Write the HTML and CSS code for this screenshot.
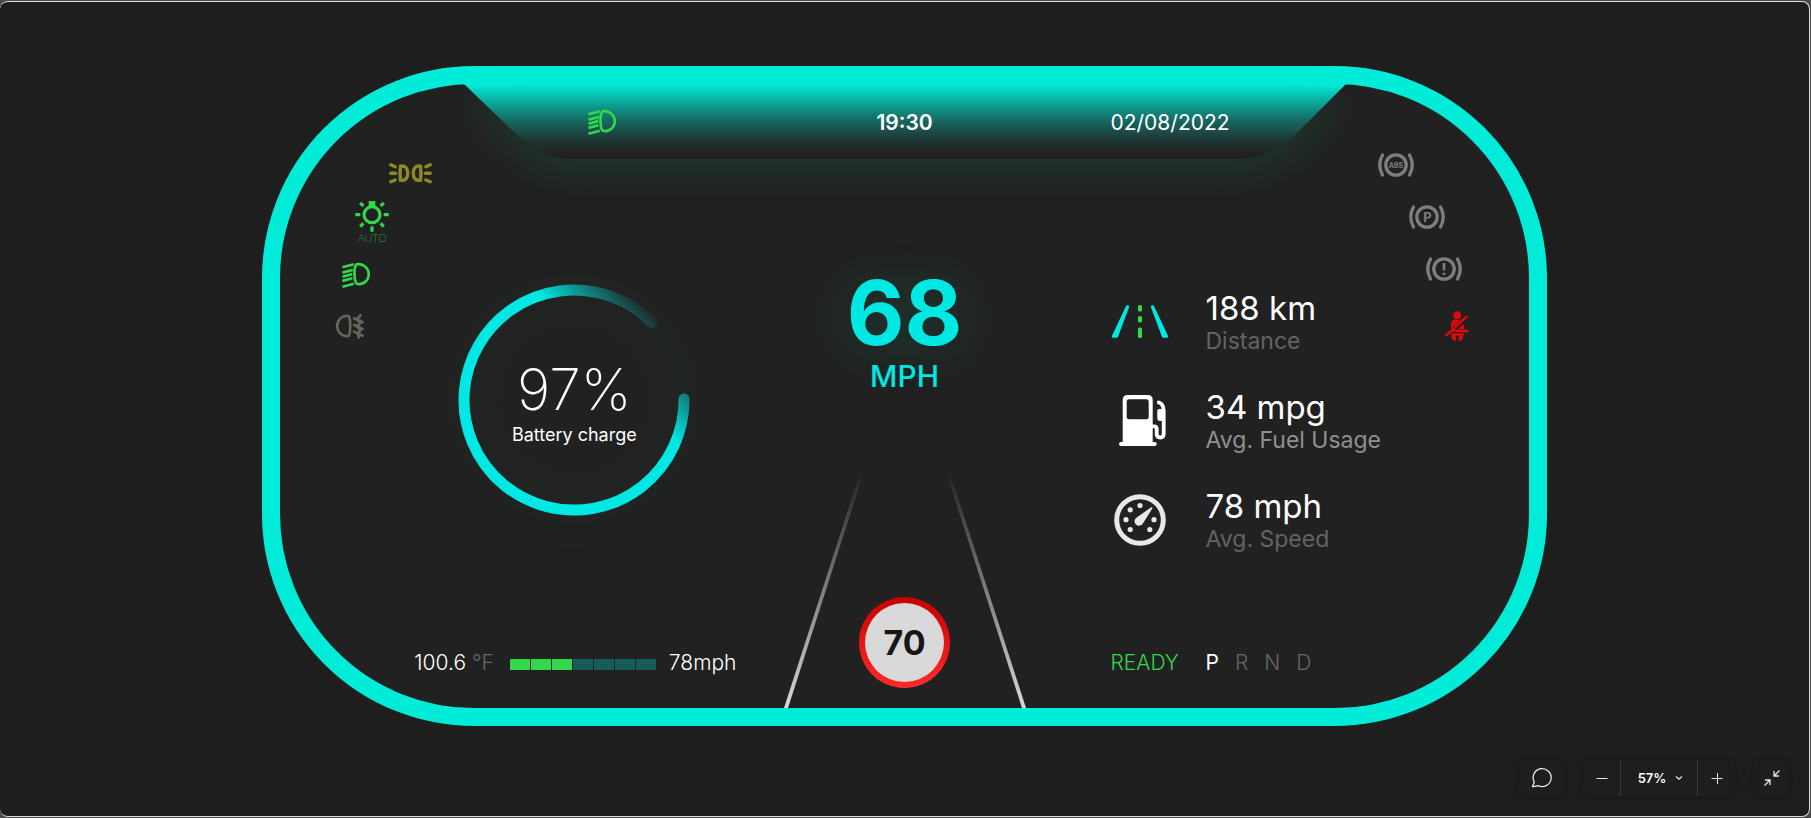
FILE: index.html
```html
<!DOCTYPE html>
<html lang="en">
<head>
<meta charset="utf-8">
<title>Car dashboard</title>
<link rel="stylesheet" href="styles.css">
</head>
<body>
<div class="window">
  <main class="stage">
    <section class="cluster" aria-label="Instrument cluster">
      <header class="topbar">
        <svg class="topbar-shape" viewBox="0 0 882 75" preserveAspectRatio="none" aria-hidden="true">
          <defs>
            <linearGradient id="topFade" x1="0" y1="0" x2="0" y2="1">
              <stop offset="0" stop-color="#00ecd8"/>
              <stop offset=".25" stop-color="#0ba699"/>
              <stop offset=".5" stop-color="#17665f"/>
              <stop offset=".75" stop-color="#1e3734"/>
              <stop offset=".95" stop-color="#211f20"/>
              <stop offset="1" stop-color="#211f20"/>
            </linearGradient>
          </defs>
          <path d="M0 0H882L832 50Q804 75 772 75H110Q78 75 52 50Z" fill="url(#topFade)"/>
        </svg>
        <svg class="topbar-lamp green" width="28" height="25" viewBox="0 0 28 25" role="img" aria-label="Low beam"><use href="#lowbeam"/></svg>
        <time class="clock">19:30</time>
        <time class="date" datetime="2022-08-02">02/08/2022</time>
      </header>

      <div class="panels">
        <div class="panel">
          <div class="panel-main">
            <ul class="lamps lamps-left">
              <li class="lamp step-1 olive">
                <svg width="43" height="21" viewBox="0 0 43 21" role="img" aria-label="Parking lights">
                  <g fill="none" stroke="currentColor" stroke-width="3.4" stroke-linecap="round">
                    <path d="M1.8 1.8 6.2 3.7M1.8 10.2H6.5M1.8 18.8 6.2 17M41.2 1.8 36.8 3.7M41.2 10.2H36.5M41.2 18.8 36.8 17"/>
                    <path d="M11.5 3.2C17 2.2 18.7 6 18.7 10.2S17 18.2 11.5 17.2C10.9 13 10.9 7.4 11.5 3.2ZM31.5 3.2C26 2.2 24.3 6 24.3 10.2S26 18.2 31.5 17.2C32.1 13 32.1 7.4 31.5 3.2Z"/>
                  </g>
                </svg>
              </li>
              <li class="lamp step-2 green">
                <svg width="34" height="31" viewBox="0 0 34 31" role="img" aria-label="Automatic lights">
                  <rect x="13.7" y="0" width="6.6" height="7" fill="currentColor"/>
                  <circle cx="17" cy="13.7" r="8" fill="none" stroke="currentColor" stroke-width="3.2"/>
                  <path d="M.3 13.7H5.3M28.7 13.7H33.7M17 25.5V30.8M5.2 1.8 8.4 5M28.8 1.8 25.6 5M8.4 22.3 5.2 25.5M25.6 22.3 28.8 25.5" stroke="currentColor" stroke-width="3.2"/>
                </svg>
                <span class="lamp-text">AUTO</span>
              </li>
              <li class="lamp step-3 green">
                <svg width="28" height="25" viewBox="0 0 28 25" role="img" aria-label="Low beam">
                  <g id="lowbeam" fill="none" stroke="currentColor" stroke-width="2.7">
                    <path d="M.4 4.3 11.8 1.2M.4 9.6 10.8 7M.4 13.7 10.2 11.1M.4 17.9 10.4 15.3M.4 23.7 11.8 20.7"/>
                    <path d="M14.6 1.3C20 .2 26.7 4.3 26.7 11.2S20.5 22.2 15 20.8C12.2 19.5 11.2 4.5 14.6 1.3Z"/>
                  </g>
                </svg>
              </li>
              <li class="lamp step-4 taupe">
                <svg width="28" height="25" viewBox="0 0 28 25" role="img" aria-label="Rear fog light">
                  <g fill="none" stroke="currentColor" stroke-width="2.7" stroke-linecap="round">
                    <path d="M12.5 2C6 1 1.2 6 1.2 12S6 23 12.5 22C14.8 19 14.8 5 12.5 2Z"/>
                    <path d="M18 4.2 26.6 8M18 10.8 26.6 15M18 17.6 26.6 21.8"/>
                    <path d="M24.6 1.2 20.8 5.5 24.2 9.2 21 12.8 24.4 16.2 22 19.8 22.6 23.6"/>
                  </g>
                </svg>
              </li>
            </ul>
            <div class="gauge">
              <svg class="gauge-ring" viewBox="0 0 232 232" aria-hidden="true">
                <defs>
                  <linearGradient id="ringFade" gradientUnits="userSpaceOnUse" x1="149.6" y1="84.6" x2="200.1" y2="37.6">
                    <stop offset="0" stop-color="#00e8e3"/>
                    <stop offset="1" stop-color="#00e8e3" stop-opacity=".03"/>
                  </linearGradient>
                </defs>
                <path d="M226 116A110 110 0 1 1 194 39.5" fill="none" stroke="url(#ringFade)" stroke-width="11" stroke-linecap="round"/>
              </svg>
              <div class="gauge-text">
                <strong class="gauge-value">97%</strong>
                <span class="gauge-label">Battery charge</span>
              </div>
            </div>
          </div>
          <div class="status">
            <span>100.6 <span class="unit">°F</span></span>
            <span class="meter" role="img" aria-label="Level 3 of 7">
              <i class="seg on"></i><i class="seg on"></i><i class="seg on"></i><i class="seg"></i><i class="seg"></i><i class="seg"></i><i class="seg"></i>
            </span>
            <span>78mph</span>
          </div>
        </div>

        <div class="center">
          <strong class="speed">68</strong>
          <span class="speed-unit">MPH</span>
          <div class="road">
            <svg class="road-lines" width="240" height="238" viewBox="0 0 240 238" aria-hidden="true">
              <defs>
                <linearGradient id="roadFade" x1="0" y1="0" x2="0" y2="1">
                  <stop offset="0" stop-color="#d9d9d9" stop-opacity="0"/>
                  <stop offset="1" stop-color="#d9d9d9"/>
                </linearGradient>
              </defs>
              <path d="M76 0H79.5L3 238H-1Z" fill="url(#roadFade)"/>
              <path d="M164 0H160.5L237 238H241Z" fill="url(#roadFade)"/>
            </svg>
            <span class="limit">70</span>
          </div>
        </div>

        <div class="panel">
          <div class="panel-main">
            <ul class="stats">
              <li class="stat">
                <svg class="stat-icon" width="58" height="34" viewBox="0 0 58 34" aria-hidden="true">
                  <path d="M16.1 1.5 17 1.7 5.8 31.5H2ZM41.9 1.5 41 1.7 52.2 31.5H56Z" fill="#00e8e3" stroke="#00e8e3" stroke-width="2.4" stroke-linejoin="round"/>
                  <g fill="#32d74b"><rect x="27" y="0" width="4" height="6.5" rx="1.5"/><rect x="27" y="11" width="4" height="6.5" rx="1.5"/><rect x="27" y="22.5" width="4" height="10.5" rx="1.5"/></g>
                </svg>
                <div class="stat-text"><strong class="stat-value">188 km</strong><span class="stat-label">Distance</span></div>
              </li>
              <li class="stat">
                <svg class="stat-icon" width="54" height="52" viewBox="-6 0 54 52" aria-hidden="true">
                  <path fill="#fff" fill-rule="evenodd" d="M8.7 0H28.7Q33.7 0 33.7 5V47H35.7Q37.7 47 37.7 49T35.7 51H2Q0 51 0 49T2 47H3.7V5Q3.7 0 8.7 0ZM10.2 4.3Q7.7 4.3 7.7 6.8V21.8Q7.7 24.3 10.2 24.3H27.2Q29.7 24.3 29.7 21.8V6.8Q29.7 4.3 27.2 4.3Z"/>
                  <path d="M33 31.3H35.2Q37.7 31.3 37.7 34V39Q37.7 42.5 41.2 42.5T44.7 39V16Q44.7 9 39.8 7.5" fill="none" stroke="#fff" stroke-width="3.8" stroke-linecap="round"/>
                  <path d="M40 14H46V26H41Q38.3 26 38.3 23V16Q38.3 14 40 14Z" fill="#fff"/>
                </svg>
                <div class="stat-text"><strong class="stat-value">34 mpg</strong><span class="stat-label bright">Avg. Fuel Usage</span></div>
              </li>
              <li class="stat">
                <svg class="stat-icon" width="52" height="52" viewBox="0 0 52 52" aria-hidden="true">
                  <circle cx="26" cy="26" r="23.3" fill="none" stroke="#e8e8e8" stroke-width="5"/>
                  <g fill="#e8e8e8">
                    <circle cx="26" cy="11.5" r="2.6"/><circle cx="16.2" cy="15.8" r="2.6"/><circle cx="12" cy="25.7" r="2.6"/><circle cx="40" cy="25.7" r="2.6"/><circle cx="16.2" cy="35.5" r="2.6"/><circle cx="35.8" cy="35.5" r="2.6"/>
                    <path d="M37.3 13.2Q38.7 13 38.3 14.5L29.2 28.9A4.5 4.5 0 1 1 23 23.2Z"/>
                  </g>
                </svg>
                <div class="stat-text"><strong class="stat-value">78 mph</strong><span class="stat-label">Avg. Speed</span></div>
              </li>
            </ul>
            <ul class="lamps lamps-right">
              <li class="lamp step-1 gray">
                <svg width="36" height="24" viewBox="0 0 36 24" role="img" aria-label="ABS">
                  <g id="brake" fill="none" stroke="currentColor" stroke-width="3.3"><circle cx="18" cy="12" r="10.2"/><path stroke-linecap="round" d="M4.5 2Q-1 12 4.5 22M31.5 2Q37 12 31.5 22"/></g>
                  <text class="glyph-abs" x="18" y="14.5">ABS</text>
                </svg>
              </li>
              <li class="lamp step-2 gray">
                <svg width="36" height="24" viewBox="0 0 36 24" role="img" aria-label="Parking brake"><use href="#brake"/><text class="glyph-p" x="18.5" y="17">P</text></svg>
              </li>
              <li class="lamp step-3 gray">
                <svg width="36" height="24" viewBox="0 0 36 24" role="img" aria-label="Brake warning"><use href="#brake"/><path d="M18 6V13.5M18 15.7V18" stroke="currentColor" stroke-width="2.6"/></svg>
              </li>
              <li class="lamp lamp-belt step-4 red">
                <svg width="24" height="30" viewBox="0 0 24 30" role="img" aria-label="Fasten seat belt">
                  <g fill="currentColor">
                    <circle cx="12.2" cy="4.2" r="3.9"/>
                    <path d="M8.5 8.7H15.5C18 10.5 19.3 14 19.5 18.3L5.8 17.5C5.9 13 6.3 10 8.5 8.7Z"/>
                    <path d="M6 22 18.8 22.3C18.6 25 17.5 27.5 16.3 29.8H13.2L14 24.8H10.6L11.3 29.8H8.3C7 27.5 6 25 6 22Z"/>
                  </g>
                  <path class="belt-gap" d="M6 21.2 18 10.2"/>
                  <path d="M1.4 24.2 21.4 5.8M7.5 19.4 22.6 20.2" fill="none" stroke="currentColor" stroke-width="2.5" stroke-linecap="round"/>
                </svg>
              </li>
            </ul>
          </div>
          <div class="drive">
            <span class="ready">READY</span>
            <span class="gears"><b class="gear active">P</b><span class="gear">R</span><span class="gear">N</span><span class="gear">D</span></span>
          </div>
        </div>
      </div>
    </section>
  </main>

  <footer class="toolbar">
    <button class="tool tool-comment" type="button" aria-label="Comments">
      <svg width="22" height="22" viewBox="0 0 22 22"><path d="M1.5 19.5 3.3 15A9 9 0 1 1 7 18.6Q4 19.5 1.5 19.5Z" fill="none" stroke="#e6e6e6" stroke-width="1.3" stroke-linejoin="round"/></svg>
    </button>
    <div class="tool zoom">
      <button class="zoom-step" type="button" aria-label="Zoom out"><svg width="12" height="12" viewBox="0 0 12 12"><path d="M.5 6.500H11.5" stroke="#e6e6e6"/></svg></button>
      <button class="zoom-level" type="button">57%<svg width="8" height="6" viewBox="0 0 8 6"><path d="M1 1.5 4 4.2 7 1.5" fill="none" stroke="#e6e6e6" stroke-width="1.3"/></svg></button>
      <button class="zoom-step" type="button" aria-label="Zoom in"><svg width="12" height="12" viewBox="0 0 12 12"><path d="M.5 6.500H11.5M6.500 1V12" stroke="#e6e6e6"/></svg></button>
    </div>
    <button class="tool tool-exit" type="button" aria-label="Exit full screen">
      <svg width="18" height="18" viewBox="0 0 18 18"><path d="M16.5 1.5 11 7M11 2V7H16M1.5 16.5 7 11M2 11H7V16" fill="none" stroke="#e6e6e6" stroke-width="1.3"/></svg>
    </button>
  </footer>
</div>
</body>
</html>
```

FILE: styles.css
```css
* { box-sizing: border-box; }

body {
  margin: 0;
  min-height: 100vh;
  display: flex;
  padding: 1px 1px 1px 0;
  background: #4a4a4a;
  font-family: Inter, "Liberation Sans", sans-serif;
  color: #fff;
}

ul { list-style: none; margin: 0; padding: 0; }
svg { display: block; overflow: visible; flex: none; }
button { border: 0; padding: 0; background: none; color: inherit; font: inherit; }

.window {
  flex: 1;
  display: flex;
  flex-direction: column;
  justify-content: space-between;
  background: #1e1e1e;
  border: 1px solid #dcdcdc;
  border-left: 0;
  border-radius: 8px;
}

.stage { padding-top: 64px; }

.cluster {
  width: 71%;
  min-width: 1260px;
  margin: 0 auto;
  border: 18px solid #00ecd8;
  border-radius: 212px;
  background: #212121;
}

/* Header */
.topbar {
  position: relative;
  width: 882px;
  max-width: 71%;
  height: 75px;
  padding-top: 2px;
  margin: 0 auto;
  display: grid;
  grid-template-columns: 1fr 240px 1fr;
  align-items: center;
}
.topbar-shape {
  position: absolute;
  inset: 0;
  width: 100%;
  height: 100%;
  filter: drop-shadow(0 12px 20px rgba(0, 240, 160, .1));
}
.topbar-lamp { position: relative; justify-self: end; margin-right: 169px; }
.clock, .date { position: relative; font-size: 21px; line-height: 24px; }
.clock { text-align: center; font-weight: 600; }
.date { padding-left: 86px; font-weight: 400; }

/* Body */
.panels { display: grid; grid-template-columns: 1fr 240px 1fr; }
.panel { display: flex; flex-direction: column; justify-content: space-between; }
.panel-main { display: flex; justify-content: space-between; }

/* Warning lamps follow the curve of the frame */
.lamps { display: flex; flex-direction: column; flex: none; }
.lamps-left { width: 156px; gap: 23px; }
.lamps-right { width: 136px; gap: 24px; align-items: flex-end; margin-top: -8px; }
.lamp {
  height: 28px;
  display: flex;
  flex-direction: column;
  align-items: center;
  justify-content: center;
}
.lamp-belt { height: 38px; }
.lamp-text { margin-bottom: 4px; font: 300 11px/12px "Open Sans", sans-serif; color: #239640; }
.lamps-left .lamp { width: 44px; }
.lamps-left .step-1 { margin-left: 108px; }
.lamps-left .step-2 { margin-left: 70px; }
.lamps-left .step-3 { margin-left: 54px; }
.lamps-left .step-4 { margin-left: 48px; }
.lamps-right .step-1 { margin-right: 115px; }
.lamps-right .step-2 { margin-right: 84px; }
.lamps-right .step-3 { margin-right: 67px; }
.lamps-right .step-4 { margin-right: 60px; }
.glyph-abs, .glyph-p { fill: currentColor; text-anchor: middle; font-weight: 700; }
.glyph-abs { font-size: 7px; }
.glyph-p { font-size: 13px; }
.belt-gap { stroke: #212121; stroke-width: 5; }

.green { color: #32d74b; }
.olive { color: #8c8a22; }
.taupe { color: #66635a; }
.gray { color: #7e7e7e; }
.red { color: #dc0a0a; }

/* Battery gauge */
.gauge {
  width: 232px;
  height: 232px;
  margin: 124px auto 0 22px;
  display: grid;
  place-items: center;
  border-radius: 50%;
  background: radial-gradient(circle, #212121 40%, #202423 70%);
  box-shadow: 0 0 60px 6px rgba(0, 232, 160, .03);
}
.gauge > * { grid-area: 1 / 1; }
.gauge-ring { width: 100%; height: 100%; }
.gauge-text { display: flex; flex-direction: column; align-items: center; padding-top: 8px; }
.gauge-value { font-size: 57px; line-height: 64px; font-weight: 200; }
.gauge-label { font-size: 18px; line-height: 26px; }

.status {
  display: flex;
  align-items: center;
  gap: 13px;
  padding: 0 0 32px 134px;
  font-size: 21px;
  line-height: 26px;
  font-weight: 300;
}
.unit { color: #666; }
.meter { display: flex; gap: 1px; margin: 3px 0 0 3px; }
.seg { width: 20px; height: 11px; background: #175c59; }
.seg.on { background: #32d74b; }

/* Speed and road */
.center { display: flex; flex-direction: column; align-items: center; padding-top: 109px; color: #00e8e3; }
.speed { font-size: 89px; line-height: 90px; font-weight: 700; text-shadow: 0 4px 60px rgba(0, 232, 160, .2); }
.speed-unit { font-size: 30px; line-height: 36px; font-weight: 500; }
.road { display: grid; justify-items: center; align-items: end; margin-top: 76px; }
.road > * { grid-area: 1 / 1; }
.limit {
  width: 91px;
  height: 91px;
  margin-bottom: 20px;
  display: grid;
  place-items: center;
  border: 6px solid transparent;
  border-radius: 50%;
  background: linear-gradient(#d9d9d9, #d9d9d9) padding-box, linear-gradient(#c80000, #ff2a2a) border-box;
  color: #161616;
  font-size: 34px;
  font-weight: 700;
}

/* Trip statistics */
.stats { display: flex; flex-direction: column; gap: 33px; padding: 130px 0 0 86px; white-space: nowrap; }
.stat { display: grid; grid-template-columns: 58px auto; gap: 37px; align-items: center; }
.stat-icon { justify-self: center; }
.stat-text { display: flex; flex-direction: column; }
.stat-value { font-size: 33px; line-height: 38px; font-weight: 400; }
.stat-label { font-size: 23px; line-height: 28px; color: #636363; }
.stat-label.bright { color: #909090; }

.drive {
  display: grid;
  grid-template-columns: 95px auto;
  justify-content: start;
  padding: 0 0 32px 86px;
  font-size: 21px;
  line-height: 26px;
  font-weight: 300;
}
.ready { color: #32d74b; }
.gears { display: flex; gap: 16px; }
.gear { color: #666; }
.gear.active { color: #fff; font-weight: 400; }

/* Canvas controls */
.toolbar { display: flex; justify-content: flex-end; gap: 18px; padding: 0 19px 20px; }
.tool { height: 36px; border-radius: 6px; box-shadow: 0 1px 4px rgba(0, 0, 0, .28); }
.tool-comment, .tool-exit { display: grid; place-items: center; }
.tool-comment { width: 46px; }
.tool-exit { width: 37px; }
.zoom { display: flex; }
.zoom-step { width: 37px; display: grid; place-items: center; }
.zoom-level {
  width: 78px;
  padding-left: 3px;
  display: flex;
  align-items: center;
  justify-content: center;
  gap: 9px;
  border: 1px solid #3a3a3a;
  border-width: 0 1px;
  font-size: 13px;
  font-weight: 600;
}
```
